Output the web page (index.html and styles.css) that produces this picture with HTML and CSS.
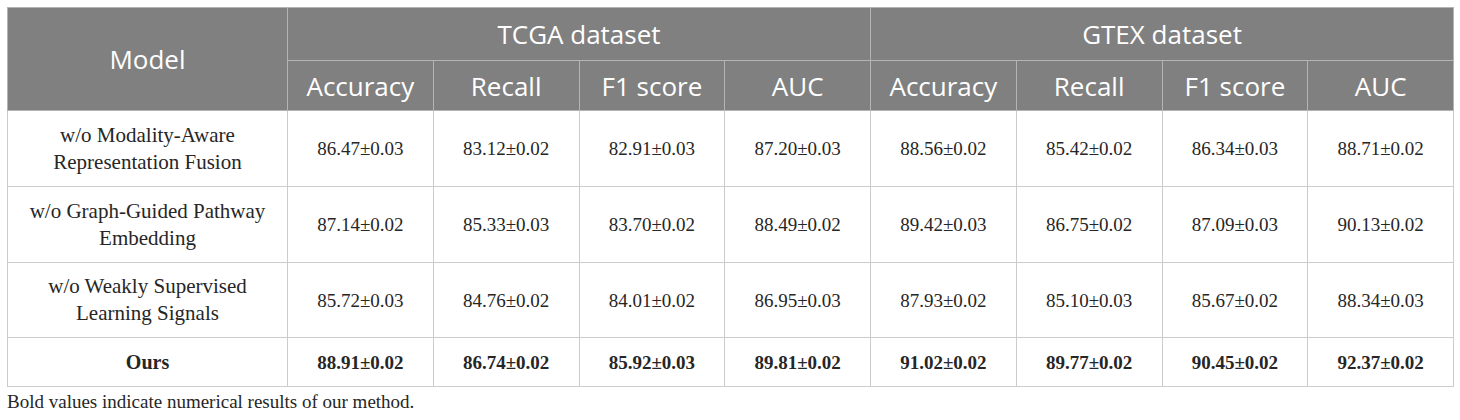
FILE: index.html
```html
<!DOCTYPE html>
<html>
<head>
<meta charset="utf-8">
<link rel="stylesheet" href="styles.css">
</head>
<body>
<div class="wrap">
<table class="results">
  <colgroup>
    <col class="c-model">
    <col span="8" class="c-val">
  </colgroup>
  <thead>
    <tr class="h1">
      <th rowspan="2">Model</th>
      <th colspan="4">TCGA dataset</th>
      <th colspan="4">GTEX dataset</th>
    </tr>
    <tr class="h2">
      <th>Accuracy</th><th>Recall</th><th>F1 score</th><th>AUC</th>
      <th>Accuracy</th><th>Recall</th><th>F1 score</th><th>AUC</th>
    </tr>
  </thead>
  <tbody>
    <tr class="r2">
      <td class="label">w/o Modality-Aware<br>Representation Fusion</td>
      <td>86.47±0.03</td><td>83.12±0.02</td><td>82.91±0.03</td><td>87.20±0.03</td>
      <td>88.56±0.02</td><td>85.42±0.02</td><td>86.34±0.03</td><td>88.71±0.02</td>
    </tr>
    <tr class="r2">
      <td class="label">w/o Graph-Guided Pathway<br>Embedding</td>
      <td>87.14±0.02</td><td>85.33±0.03</td><td>83.70±0.02</td><td>88.49±0.02</td>
      <td>89.42±0.03</td><td>86.75±0.02</td><td>87.09±0.03</td><td>90.13±0.02</td>
    </tr>
    <tr class="r2 r3">
      <td class="label">w/o Weakly Supervised<br>Learning Signals</td>
      <td>85.72±0.03</td><td>84.76±0.02</td><td>84.01±0.02</td><td>86.95±0.03</td>
      <td>87.93±0.02</td><td>85.10±0.03</td><td>85.67±0.02</td><td>88.34±0.03</td>
    </tr>
    <tr class="ours">
      <td class="label">Ours</td>
      <td>88.91±0.02</td><td>86.74±0.02</td><td>85.92±0.03</td><td>89.81±0.02</td>
      <td>91.02±0.02</td><td>89.77±0.02</td><td>90.45±0.02</td><td>92.37±0.02</td>
    </tr>
  </tbody>
</table>
<p class="note">Bold values indicate numerical results of our method.</p>
</div>
</body>
</html>
```
FILE: styles.css
```css
html, body {
  margin: 0;
  padding: 0;
  background: #ffffff;
}
.wrap {
  padding: 7px 7px 0 7px;
}
.results {
  width: 1446px;
  border-collapse: collapse;
  table-layout: fixed;
}
.c-model { width: 280px; }
.c-val { width: 145.75px; }

.results th {
  background: #808080;
  color: #ffffff;
  font-family: "Open Sans", "DejaVu Sans", sans-serif;
  font-weight: 400;
  font-size: 26px;
  text-align: center;
  border: 1px solid #b4b4b4;
  padding: 0;
  vertical-align: middle;
}
.h1 th { height: 52px; }
.h2 th { height: 49px; }

.results td {
  font-family: "Liberation Serif", "Times New Roman", serif;
  font-size: 19px;
  line-height: 27px;
  color: #262626;
  text-align: center;
  vertical-align: middle;
  border: 1px solid #cccccc;
  padding: 0;
}
.results td.label {
  font-size: 21px;
  line-height: 27px;
}
.r2 td { height: 75px; }
.r3 td { height: 74px; }
.ours td {
  height: 48px;
  font-weight: 700;
}
.ours td.label { font-size: 20px; }
.note {
  margin: 3px 0 0 0;
  font-family: "Liberation Serif", "Times New Roman", serif;
  font-size: 19px;
  line-height: 24px;
  color: #262626;
}
```
